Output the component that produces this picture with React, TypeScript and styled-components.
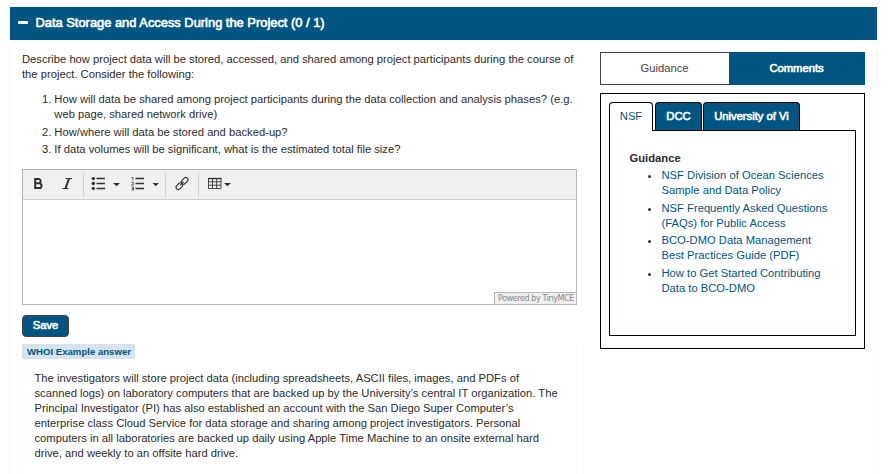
import React from 'react';
import styled, { createGlobalStyle } from 'styled-components';

const Global = createGlobalStyle`
  * { box-sizing: border-box; }
  body { margin: 0; background: #fff; color: #2b2b2b; overflow: hidden;
    font: 11.22px/15px "Liberation Sans", Arial, sans-serif; }
  ol, ul, p { margin: 0; padding: 0; list-style: none; }
`;

const blue = '#005583';

const Page = styled.div`
  width: 869px; height: 471px; margin: 3px 0 0 9px;
  border: solid #f7f7f7; border-width: 1px 1px 0;
`;
const Header = styled.header`
  height: 33px; margin-top: 3px; background: ${blue}; color: #fff;
  display: flex; align-items: center; padding: 0 0 3px 8px; gap: 7.5px;
`;
const Minus = styled.span`width: 10px; height: 3px; border-radius: 1px; background: #fff;`;
const Text = styled.span<{ $size?: number; $stroke?: number }>`
  display: block; white-space: nowrap;
  font-size: ${p => p.$size ?? 11.22}px;
  -webkit-text-stroke: ${p => p.$stroke ?? 0}px currentColor;
`;
const Columns = styled.div`display: flex; justify-content: space-between; padding: 12px 12px 0;`;
const Main = styled.main`width: 555px;`;
const Lines = styled.div`display: flex; flex-direction: column; align-items: flex-start;`;
const Questions = styled.ol`margin: 10px 0 0 20px;`;
const Question = styled.li<{ $gap?: number }>`display: flex; gap: 3px; margin-bottom: ${p => p.$gap ?? 0}px;`;

const Editor = styled.section`
  height: 136px; margin-top: 12px; border: 1px solid #b5b5b5;
  display: flex; flex-direction: column; justify-content: space-between;
`;
const Toolbar = styled.div`
  height: 30px; background: #f0f0f0; border-bottom: 1px solid #d0d0d0;
  svg { display: block; }
`;
const Powered = styled.div`
  align-self: flex-end; width: 83px; height: 13px; margin: 0 -1px -1px 0;
  border: 1px solid #b5b5b5; background: #efefef; color: #8a8a8a;
  font: 8px/11px "DejaVu Sans", sans-serif; letter-spacing: -0.4px; padding-left: 3px; white-space: nowrap;
`;
const Save = styled.button`
  display: block; width: 47px; height: 22px; margin-top: 10px; padding: 0 0 2px;
  border: 1px solid #444; border-radius: 4px; background: ${blue}; color: #fff;
  font: 11.22px/18px "Liberation Sans", Arial, sans-serif;
`;
const Example = styled.section`
  height: 130px; margin-top: 7px; border: solid #fafafa; border-width: 0 1px;
`;
const Label = styled.div`
  width: 113px; height: 15px; margin-left: -1px; padding-left: 5px;
  background: #d6e3ef; color: ${blue}; font-weight: bold;
`;
const Answer = styled(Lines)`padding: 12px 0 0 11.5px;`;

const Side = styled.aside`width: 265px;`;
const Switch = styled.div`display: flex; height: 33px;`;
const SwitchTab = styled.div<{ $active?: boolean }>`
  width: ${p => (p.$active ? 129 : 136)}px;
  display: flex; align-items: center; justify-content: center;
  border: ${p => (p.$active ? '1px solid #444' : '0')};
  border-right: 0; padding-right: 1px;
  background: ${p => (p.$active ? '#fff' : blue)};
  color: ${p => (p.$active ? '#444' : '#fff')};
`;
const Frame = styled.div`height: 256px; margin-top: 8px; padding: 8px; border: 1px solid #000;`;
const Tabs = styled.div`display: flex; height: 29px;`;
const Tab = styled.div<{ $w: number; $active?: boolean; $gap?: number }>`
  width: ${p => p.$w}px; height: ${p => (p.$active ? 29 : 28)}px; margin-right: ${p => p.$gap ?? 0}px;
  border: 1px solid #000; border-bottom: 0; border-radius: 4px 4px 0 0;
  background: ${p => (p.$active ? '#fff' : blue)}; color: ${p => (p.$active ? blue : '#fff')};
  position: relative; z-index: 1; text-align: center; line-height: 27px;
`;
const Panel = styled.div`width: 247px; height: 206px; margin-top: -1px; padding: 7px; border: 1px solid #000;`;
const Inner = styled.div`width: 232px; height: 187px; padding: 12px 0 0 11.5px; border: solid #fafafa; border-width: 0 1px 1px;`;
const Title = styled.div`font-weight: bold; padding-top: 1px;`;
const Links = styled.ul`padding: 2px 0 0 32px; color: ${blue};`;
const LinkItem = styled.li<{ $gap: number }>`
  position: relative; margin-bottom: ${p => p.$gap}px;
  &::before { content: ''; position: absolute; left: -13.5px; top: 7px; width: 3px; height: 3px; border-radius: 50%; background: #333; }
`;

const links: { lines: string[]; gap: number }[] = [
  { lines: ['NSF Division of Ocean Sciences', 'Sample and Data Policy'], gap: 3 },
  { lines: ['NSF Frequently Asked Questions', '(FAQs) for Public Access'], gap: 2 },
  { lines: ['BCO-DMO Data Management', 'Best Practices Guide (PDF)'], gap: 3 },
  { lines: ['How to Get Started Contributing', 'Data to BCO-DMO'], gap: 0 },
];

const answer = [
  'The investigators will store project data (including spreadsheets, ASCII files, images, and PDFs of',
  'scanned logs) on laboratory computers that are backed up by the University’s central IT organization. The',
  'Principal Investigator (PI) has also established an account with the San Diego Super Computer’s',
  'enterprise class Cloud Service for data storage and sharing among project investigators. Personal',
  'computers in all laboratories are backed up daily using Apple Time Machine to an onsite external hard',
  'drive, and weekly to an offsite hard drive.',
];

const ToolIcons = () => (
  <svg width="240" height="29" viewBox="23 170 240 29" fill="none" stroke="#333">
    <path d="M35.200 179h3.300a2.150 2.150 0 0 1 0 4.300H35.200zM35.200 183.300h4a2.350 2.350 0 0 1 0 4.700h-4z" strokeWidth="2" />
    <path d="M65.500 178.500h6.500M62.500 188.500h6" strokeWidth="1.200" />
    <path d="M69 178.500l-3.500 10" strokeWidth="2.100" />
    <path d="M83.500 173v24M165.500 173v24M198.500 173v24" stroke="#d0d0d0" />
    <path d="M96.500 178.500h8.500M96.500 183.500h8.500M96.500 188.500h8.500M135.500 178.500h8.500M135.500 183.500h8.500M135.500 188.500h8.500" strokeWidth="1.300" />
    <g fill="#333" stroke="none">
      <circle cx="93.300" cy="178.600" r="1.700" /><circle cx="93.300" cy="183.500" r="1.700" /><circle cx="93.300" cy="188.400" r="1.700" />
      <path d="M113 183h7l-3.500 3.200zM152.500 183h6.500l-3.200 3.200zM224 183h7l-3.500 3.200z" />
    </g>
    <path d="M131.500 177.500h1.500v3M131.500 182.300h2v1l-2 1.700h2.500M131.500 187.200h2v2.800h-2M132 188.600h1.500" strokeWidth=".8" />
    <g transform="rotate(-45 182 183.500)" strokeWidth="1.100">
      <rect x="174.500" y="181.300" width="7.500" height="4.400" rx="2.200" />
      <rect x="182" y="181.300" width="7.500" height="4.400" rx="2.200" />
      <path d="M179.500 183.500h5" />
    </g>
    <path d="M208.500 178.500h12.500v10h-12.500zM208.500 181.800h12.500M208.500 185.200h12.500M212.500 178v10.500M216.700 178v10.500" strokeWidth=".9" />
    <path d="M208 178.500h13.500" strokeWidth="1.400" />
  </svg>
);

export default function App() {
  return (
    <>
      <Global />
      <Page>
        <Header><Minus /><Text $size={12.88} $stroke={0.6}>Data Storage and Access During the Project (0 / 1)</Text></Header>
        <Columns>
          <Main>
            <Lines>
              <Text>Describe how project data will be stored, accessed, and shared among project participants during the course of</Text>
              <Text>the project. Consider the following:</Text>
            </Lines>
            <Questions>
              <Question $gap={3}><span>1.</span><Lines>
                <Text>How will data be shared among project participants during the data collection and analysis phases? (e.g.</Text>
                <Text>web page, shared network drive)</Text>
              </Lines></Question>
              <Question $gap={2}><span>2.</span><Text>How/where will data be stored and backed-up?</Text></Question>
              <Question><span>3.</span><Text>If data volumes will be significant, what is the estimated total file size?</Text></Question>
            </Questions>
            <Editor>
              <Toolbar><ToolIcons /></Toolbar>
              <Powered>Powered by TinyMCE</Powered>
            </Editor>
            <Save><Text $stroke={0.6}>Save</Text></Save>
            <Example>
              <Label><Text $size={9.6}>WHOI Example answer</Text></Label>
              <Answer>{answer.map(t => <Text key={t}>{t}</Text>)}</Answer>
            </Example>
          </Main>
          <Side>
            <Switch>
              <SwitchTab $active><Text>Guidance</Text></SwitchTab>
              <SwitchTab><Text $stroke={0.6}>Comments</Text></SwitchTab>
            </Switch>
            <Frame>
              <Tabs>
                <Tab $w={44} $active $gap={2}><Text>NSF</Text></Tab>
                <Tab $w={47} $gap={1}><Text $stroke={0.6}>DCC</Text></Tab>
                <Tab $w={97}><Text $stroke={0.6}>University of Vi</Text></Tab>
              </Tabs>
              <Panel>
                <Inner>
                  <Title><Text>Guidance</Text></Title>
                  <Links>
                    {links.map(l => (
                      <LinkItem key={l.lines[0]} $gap={l.gap}>
                        <Lines>{l.lines.map(t => <Text key={t}>{t}</Text>)}</Lines>
                      </LinkItem>
                    ))}
                  </Links>
                </Inner>
              </Panel>
            </Frame>
          </Side>
        </Columns>
      </Page>
    </>
  );
}
